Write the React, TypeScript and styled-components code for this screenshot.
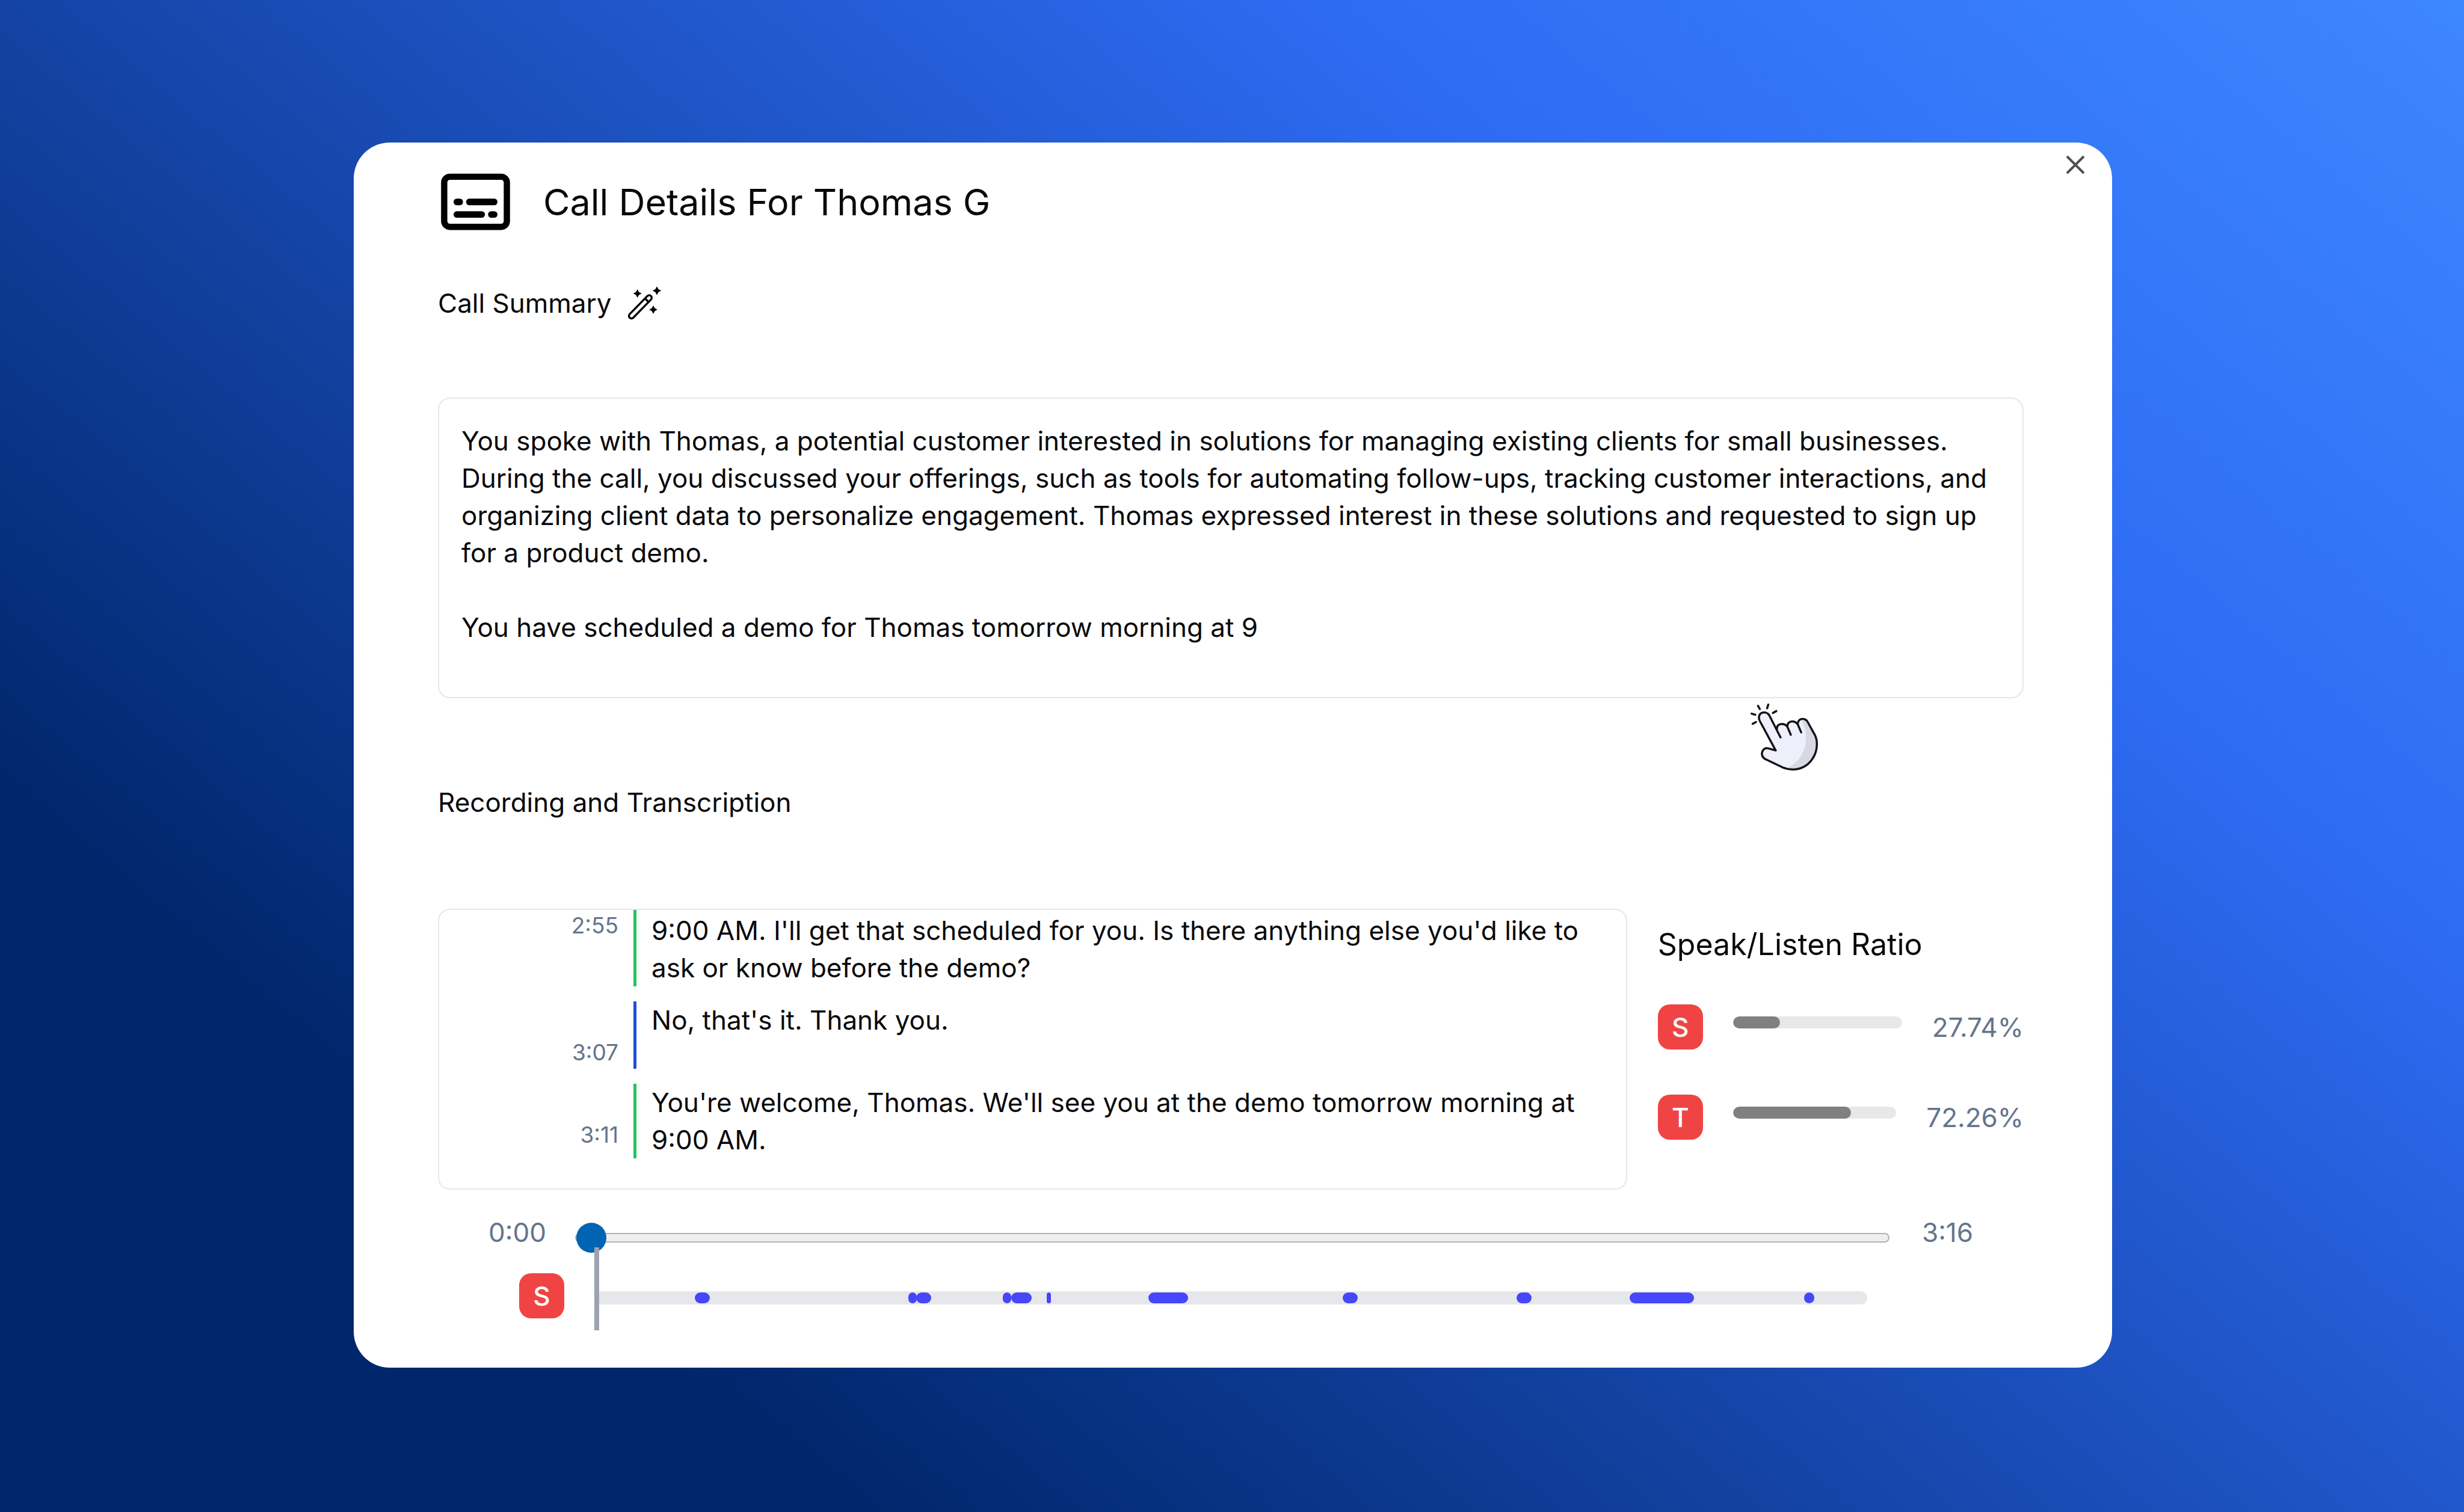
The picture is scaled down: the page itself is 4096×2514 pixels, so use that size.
import React from "react";
import styled, { createGlobalStyle } from "styled-components";

const colors = {
  text: "#09090b",
  muted: "#64748b",
  line: "#e5e7eb",
  badge: "#f04444",
  agent: "#22c55e",
  customer: "#1d4ed8",
  segment: "#4646fa",
};

const GlobalStyle = createGlobalStyle`
  *, *::before, *::after { box-sizing: border-box; }
  body {
    margin: 0;
    font-family: Inter, "Liberation Sans", sans-serif;
    font-size: 44px;
    line-height: 62px;
    color: ${colors.text};
  }
  h1, h2, h3, p, ol, ul { margin: 0; padding: 0; font-weight: 400; }
  ol, ul { list-style: none; }
`;

const Page = styled.div`
  min-height: 100vh;
  padding: 237px 585px 240px 588px;
  background: linear-gradient(40deg, #00266b 20%, #2e6bf3 73%, #3d87ff 100%);
`;

const Card = styled.main`
  position: relative;
  padding: 36px 147px 82px 140px;
  border-radius: 60px;
  background: #fff;
`;

const CloseButton = styled.button`
  position: absolute;
  top: 12px;
  right: 36px;
  display: grid;
  place-items: center;
  width: 50px;
  height: 50px;
  padding: 0;
  border: 0;
  background: none;
  color: #505050;
  cursor: pointer;
`;

const Header = styled.header`
  display: flex;
  align-items: center;
  gap: 50px;
  margin-bottom: 75px;
`;

const Title = styled.h1`
  font-size: 61px;
  line-height: 84px;
`;

const SectionHeading = styled.h2`
  display: flex;
  align-items: center;
  gap: 22px;
  font-size: 44px;
  line-height: 62px;
`;

const SummarySection = styled.section`
  position: relative;
  display: grid;
  gap: 126px;
  margin-bottom: 142px;
`;

const SummaryBox = styled.div`
  display: grid;
  gap: 62px;
  padding: 39px 37px 85px;
  border: 2px solid ${colors.line};
  border-radius: 20px;
`;

const Pointer = styled.svg`
  position: absolute;
  right: 341px;
  top: calc(100% + 8px);
  width: 114px;
  height: 114px;
`;

const RecordingSection = styled.section`
  display: grid;
  gap: 146px;
`;

const Columns = styled.div`
  display: grid;
  grid-template-columns: 13fr 4fr;
  gap: 51px;
`;

const Transcript = styled.ol`
  display: flex;
  flex-direction: column;
  gap: 25px;
  padding-bottom: 50px;
  border: 2px solid ${colors.line};
  border-radius: 20px;
  overflow: hidden;
`;

const Line = styled.li<{ $scrolled?: boolean }>`
  display: grid;
  grid-template-columns: 298px 1fr;
  gap: 25px;
  margin-top: ${(p) => (p.$scrolled ? "-59px" : "0")};
`;

const Stamp = styled.time`
  padding-top: 58px;
  font-size: 37px;
  line-height: 54px;
  text-align: right;
  color: ${colors.muted};
`;

const Speech = styled.p<{ $color: string; $scrolled?: boolean }>`
  padding: ${(p) => (p.$scrolled ? "62px" : "0")} 50px 0 25px;
  border-left: 5px solid ${(p) => p.$color};
`;

const Ratio = styled.aside`
  padding-top: 24px;
`;

const RatioTitle = styled.h3`
  margin-bottom: 65px;
  font-size: 50px;
  line-height: 70px;
`;

const RatioList = styled.ul`
  display: grid;
  gap: 75px;
`;

const RatioRow = styled.li`
  display: flex;
  align-items: center;
  gap: 50px;
`;

const Badge = styled.span`
  display: grid;
  place-items: center;
  flex: none;
  width: 75px;
  height: 75px;
  border-radius: 20px;
  background: ${colors.badge};
  color: #fff;
  font-weight: 500;
`;

const Meter = styled.div`
  flex: 1;
  align-self: flex-start;
  height: 20px;
  margin-top: 20px;
  border-radius: 10px;
  background: #e8e8ea;
  overflow: hidden;
`;

const MeterFill = styled.div`
  height: 100%;
  border-radius: 10px;
  background: #808080;
`;

const Percent = styled.span`
  color: ${colors.muted};
`;

const Player = styled.section`
  display: grid;
  gap: 20px;
  padding-top: 40px;
`;

const SeekRow = styled.div`
  display: flex;
  align-items: center;
  gap: 48px;
  padding: 0 84px;
`;

const Clock = styled.span`
  padding-bottom: 17px;
  color: ${colors.muted};
`;

const Seek = styled.input`
  flex: 1;
  min-width: 0;
  height: 50px;
  margin: 0 6px 0 0;
  appearance: none;
  background: none;
  cursor: pointer;

  &::-webkit-slider-runnable-track {
    height: 16px;
    border: 2px solid #b2b2b2;
    border-radius: 8px;
    background: #efefef;
  }

  &::-webkit-slider-thumb {
    appearance: none;
    width: 50px;
    height: 50px;
    margin-top: -19px;
    border-radius: 50%;
    background: #0064b4;
  }
`;

const TimelineRow = styled.div`
  display: flex;
  align-items: flex-end;
  gap: 50px;
  padding: 0 260px 0 135px;
`;

const Timeline = styled.div`
  position: relative;
  flex: 1;
  height: 22px;
  margin-bottom: 23px;
  border-radius: 11px;
  background: ${colors.line};
`;

const Segment = styled.span`
  position: absolute;
  top: 2px;
  height: 18px;
  border-radius: 9px;
  background: ${colors.segment};
`;

const Playhead = styled.span`
  position: absolute;
  left: 0;
  top: -73px;
  width: 8px;
  height: 138px;
  background: #9ca3af;
`;

const SubtitlesIcon = () => (
  <svg width="125" height="125" viewBox="0 0 24 24" aria-hidden="true">
    <rect x="2" y="4" width="20" height="16" rx="1.8" fill="none" stroke="#000" strokeWidth="2" />
    <g fill="#000">
      <rect x="5" y="11" width="3" height="2.1" rx="1" />
      <rect x="9" y="11" width="10" height="2.1" rx="1" />
      <rect x="5" y="15" width="10" height="2.1" rx="1" />
      <rect x="16" y="15" width="3" height="2.1" rx="1" />
    </g>
  </svg>
);

const WandIcon = () => (
  <svg width="62" height="62" viewBox="0 0 24 24" aria-hidden="true">
    <g fill="none" stroke="#000" strokeWidth="1.3" strokeLinejoin="round">
      <path d="M3 19.1 14.400 7.400a1.600 1.600 0 0 1 2.300 0 1.600 1.600 0 0 1 0 2.300L5.300 21.400a1.600 1.600 0 0 1-2.300 0 1.600 1.600 0 0 1 0-2.300Z" />
      <path d="m12.900 9 2.300 2.300" />
    </g>
    <g fill="#000" stroke="#000" strokeWidth=".4" strokeLinejoin="round">
      <path d="m8 3.500.8 1.500 1.500.8-1.500.8L8 8.100l-.8-1.500-1.500-.8 1.500-.8Z" />
      <path d="m20.500 1.600.8 1.600 1.600.8-1.600.8-.8 1.600-.8-1.600-1.600-.8 1.600-.8Z" />
      <path d="m18.200 13.900.8 1.500 1.500.8-1.500.8-.8 1.500-.8-1.500-1.500-.8 1.500-.8Z" />
    </g>
  </svg>
);

const CloseIcon = () => (
  <svg width="32" height="32" viewBox="0 0 32 32" aria-hidden="true">
    <path d="M2 2 30 30M30 2 2 30" stroke="currentColor" strokeWidth="4" />
  </svg>
);

const PointerIcon = () => (
  <Pointer viewBox="360 225 460 460" aria-hidden="true">
    <path
      d="M533 543 425 343C411 318 423 297 441 290C460 284 480 290 490 308L541 400C539 376 555 365 574 365C592 365 604 374 611 384C611 360 625 348 643 348C661 348 672 356 680 366C682 342 697 331 713 331C731 331 741 340 748 353L795 438C816 479 814 540 785 590C744 662 661 690 580 657L462 600C440 589 435 563 446 544C454 531 468 525 484 529Z"
      fill="#efeffc"
    />
    <path
      d="M704 334C724 327 741 340 748 353L795 438C816 479 814 540 785 590C748 655 680 682 610 660C665 635 710 590 728 520C745 455 733 385 704 334Z"
      fill="#d8d8e3"
    />
    <g fill="none" stroke="#121217" strokeWidth="14" strokeLinecap="round" strokeLinejoin="round">
      <path d="M565 455 490 308C480 290 460 284 441 290C423 297 414 318 425 343L533 543 484 529C468 525 454 531 446 544C435 563 440 589 462 600L580 657C661 690 744 662 785 590C814 540 816 479 795 438L748 353C741 340 731 331 713 331C697 331 682 342 680 366" />
      <path d="M541 400C539 376 555 365 574 365C592 365 604 374 611 384L634 438M611 384C609 360 625 348 643 348C661 348 672 356 680 366L704 422" />
      <path d="M371 296 396 303M414 243 426 265M483 235 475 260M514 291 537 279M378 364 401 352" />
    </g>
  </Pointer>
);

const summary = [
  "You spoke with Thomas, a potential customer interested in solutions for managing existing clients for small businesses. During the call, you discussed your offerings, such as tools for automating follow-ups, tracking customer interactions, and organizing client data to personalize engagement. Thomas expressed interest in these solutions and requested to sign up for a product demo.",
  "You have scheduled a demo for Thomas tomorrow morning at 9",
];

const transcript = [
  {
    time: "2:55",
    color: colors.agent,
    text: "9:00 AM. I'll get that scheduled for you. Is there anything else you'd like to ask or know before the demo?",
    scrolled: true,
  },
  { time: "3:07", color: colors.customer, text: "No, that's it. Thank you." },
  {
    time: "3:11",
    color: colors.agent,
    text: "You're welcome, Thomas. We'll see you at the demo tomorrow morning at 9:00 AM.",
  },
];

const ratios = [
  { initial: "S", percent: 27.74 },
  { initial: "T", percent: 72.26 },
];

// Start and length of each spoken stretch, as percentages of the call.
const segments = [
  [7.91, 1.17],
  [24.69, 0.64],
  [25.29, 1.17],
  [32.1, 0.64],
  [32.74, 1.61],
  [35.52, 0.37],
  [43.54, 3.11],
  [58.78, 1.18],
  [72.47, 1.18],
  [81.33, 5.05],
  [95.02, 0.81],
];

export default function App() {
  return (
    <>
      <GlobalStyle />
      <Page>
        <Card>
          <CloseButton type="button" aria-label="Close">
            <CloseIcon />
          </CloseButton>

          <Header>
            <SubtitlesIcon />
            <Title>Call Details For Thomas G</Title>
          </Header>

          <SummarySection>
            <SectionHeading>
              Call Summary
              <WandIcon />
            </SectionHeading>
            <SummaryBox>
              {summary.map((text) => (
                <p key={text}>{text}</p>
              ))}
            </SummaryBox>
            <PointerIcon />
          </SummarySection>

          <RecordingSection>
            <SectionHeading>Recording and Transcription</SectionHeading>
            <Columns>
              <Transcript>
                {transcript.map((line) => (
                  <Line key={line.time} $scrolled={line.scrolled}>
                    <Stamp>{line.time}</Stamp>
                    <Speech $color={line.color} $scrolled={line.scrolled}>
                      {line.text}
                    </Speech>
                  </Line>
                ))}
              </Transcript>

              <Ratio>
                <RatioTitle>Speak/Listen Ratio</RatioTitle>
                <RatioList>
                  {ratios.map((r) => (
                    <RatioRow key={r.initial}>
                      <Badge>{r.initial}</Badge>
                      <Meter>
                        <MeterFill style={{ width: `${r.percent}%` }} />
                      </Meter>
                      <Percent>{r.percent}%</Percent>
                    </RatioRow>
                  ))}
                </RatioList>
              </Ratio>
            </Columns>
          </RecordingSection>

          <Player>
            <SeekRow>
              <Clock>0:00</Clock>
              <Seek type="range" min={0} max={196} defaultValue={0} aria-label="Seek" />
              <Clock>3:16</Clock>
            </SeekRow>
            <TimelineRow>
              <Badge>S</Badge>
              <Timeline>
                {segments.map(([start, length]) => (
                  <Segment key={start} style={{ left: `${start}%`, width: `${length}%` }} />
                ))}
                <Playhead />
              </Timeline>
            </TimelineRow>
          </Player>
        </Card>
      </Page>
    </>
  );
}
